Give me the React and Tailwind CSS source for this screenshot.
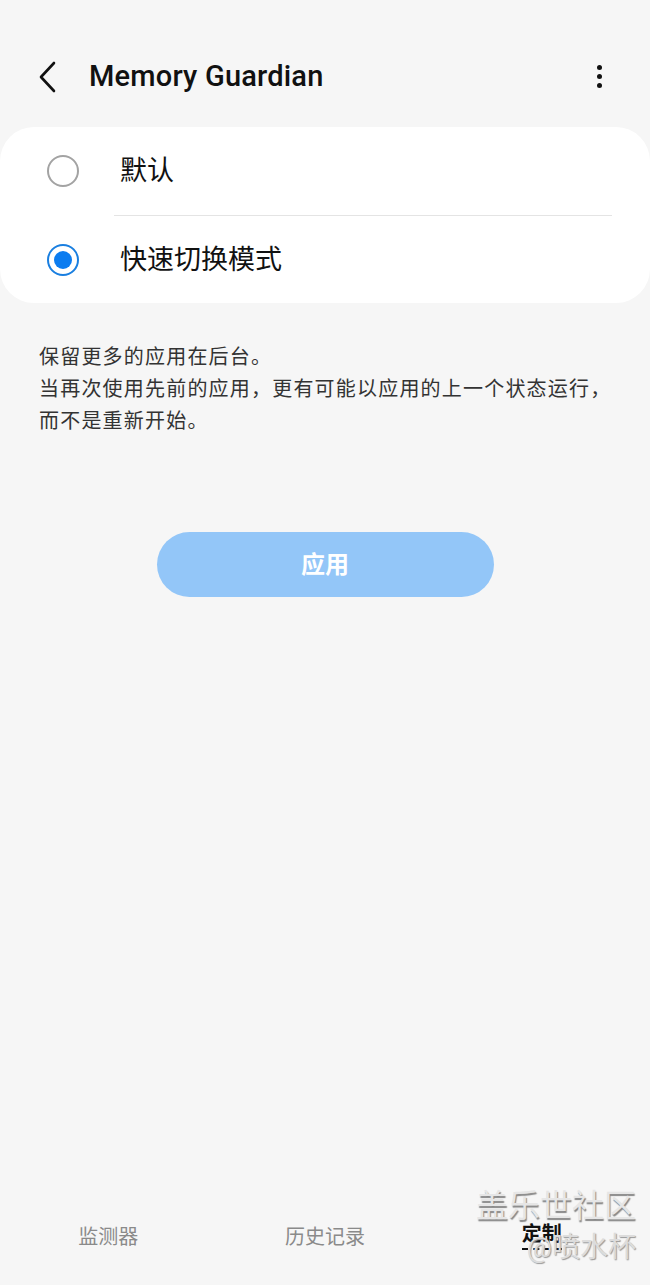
import React, { useState } from 'react';

const font = { fontFamily: '"Roboto", "Noto Sans CJK SC", sans-serif' };

const Radio = ({ checked }) => (
    checked ? (
        <span className="w-[32px] h-[32px] rounded-full border-[2px] border-[#1a7fe0] flex items-center justify-center">
            <span className="w-[18px] h-[18px] rounded-full bg-[#0b7cf0]" />
        </span>
    ) : (
        <span className="w-[32px] h-[32px] rounded-full border-[2px] border-[#a3a3a3]" />
    )
);

const App = () => {
    const [mode, setMode] = useState('fast');
    const options = [
        { id: 'default', label: '默认' },
        { id: 'fast', label: '快速切换模式' },
    ];

    return (
        <div className="w-[650px] h-[1285px] bg-[#f6f6f6] flex flex-col relative overflow-hidden" style={font}>
            {/* Header */}
            <div className="h-[127px] flex items-center pl-[36px] pr-[47px] pt-[26px]">
                <svg width="26" height="34" viewBox="0 0 26 34" className="mr-[27px]">
                    <path d="M18 3 L5 17 L18 31" fill="none" stroke="#111" strokeWidth="2.6" strokeLinecap="round" strokeLinejoin="round" />
                </svg>
                <h1 className="text-[29px] font-medium text-[#111] tracking-[0.2px]">Memory Guardian</h1>
                <div className="ml-auto flex flex-col items-center gap-[4px] w-[8px]">
                    <span className="w-[5px] h-[5px] rounded-full bg-[#111]" />
                    <span className="w-[5px] h-[5px] rounded-full bg-[#111]" />
                    <span className="w-[5px] h-[5px] rounded-full bg-[#111]" />
                </div>
            </div>

            {/* Options card */}
            <div className="bg-white rounded-[34px] h-[176px] flex flex-col">
                {options.map((opt, i) => (
                    <div key={opt.id}>
                        {i > 0 && <div className="ml-[114px] mr-[38px] h-px bg-[#e4e4e4]" />}
                        <button
                            onClick={() => setMode(opt.id)}
                            className="w-full h-[88px] flex items-center pl-[47px] text-left"
                        >
                            <Radio checked={mode === opt.id} />
                            <span className="ml-[41px] text-[27px] text-[#111]">{opt.label}</span>
                        </button>
                    </div>
                ))}
            </div>

            {/* Description */}
            <div className="pl-[39px] pt-[38px] text-[20px] leading-[32px] tracking-[1.2px] text-[#333] whitespace-nowrap">
                <p>保留更多的应用在后台。</p>
                <p>当再次使用先前的应用，更有可能以应用的上一个状态运行，</p>
                <p>而不是重新开始。</p>
            </div>

            {/* Apply */}
            <div className="flex justify-center pt-[95px]">
                <button className="w-[337px] h-[65px] rounded-full bg-[#93c6f8] text-white text-[24px] font-bold">
                    应用
                </button>
            </div>

            {/* Bottom tabs */}
            <div className="mt-auto h-[85px] grid grid-cols-3 items-start pt-[22px]">
                <div className="flex justify-center text-[20px] text-[#8a8a8a]">监测器</div>
                <div className="flex justify-center text-[20px] text-[#8a8a8a]">历史记录</div>
                <div className="flex justify-center">
                    <span className="text-[20px] font-bold text-[#111] border-b-[2px] border-dashed border-[#111] leading-[24px] pb-[2px]">定制</span>
                </div>
            </div>

            {/* Watermark */}
            <div className="absolute right-[14px] bottom-[20px] flex flex-col items-end pointer-events-none">
                <span className="text-[32px] leading-[38px] text-[#e6e6e6] [text-shadow:1px_2px_1px_#888]">盖乐世社区</span>
                <span className="text-[28px] leading-[34px] mt-[6px] text-[#dcdcdc] [text-shadow:1px_1px_1px_#999]">@喷水杯</span>
            </div>
        </div>
    );
};

export default App;
